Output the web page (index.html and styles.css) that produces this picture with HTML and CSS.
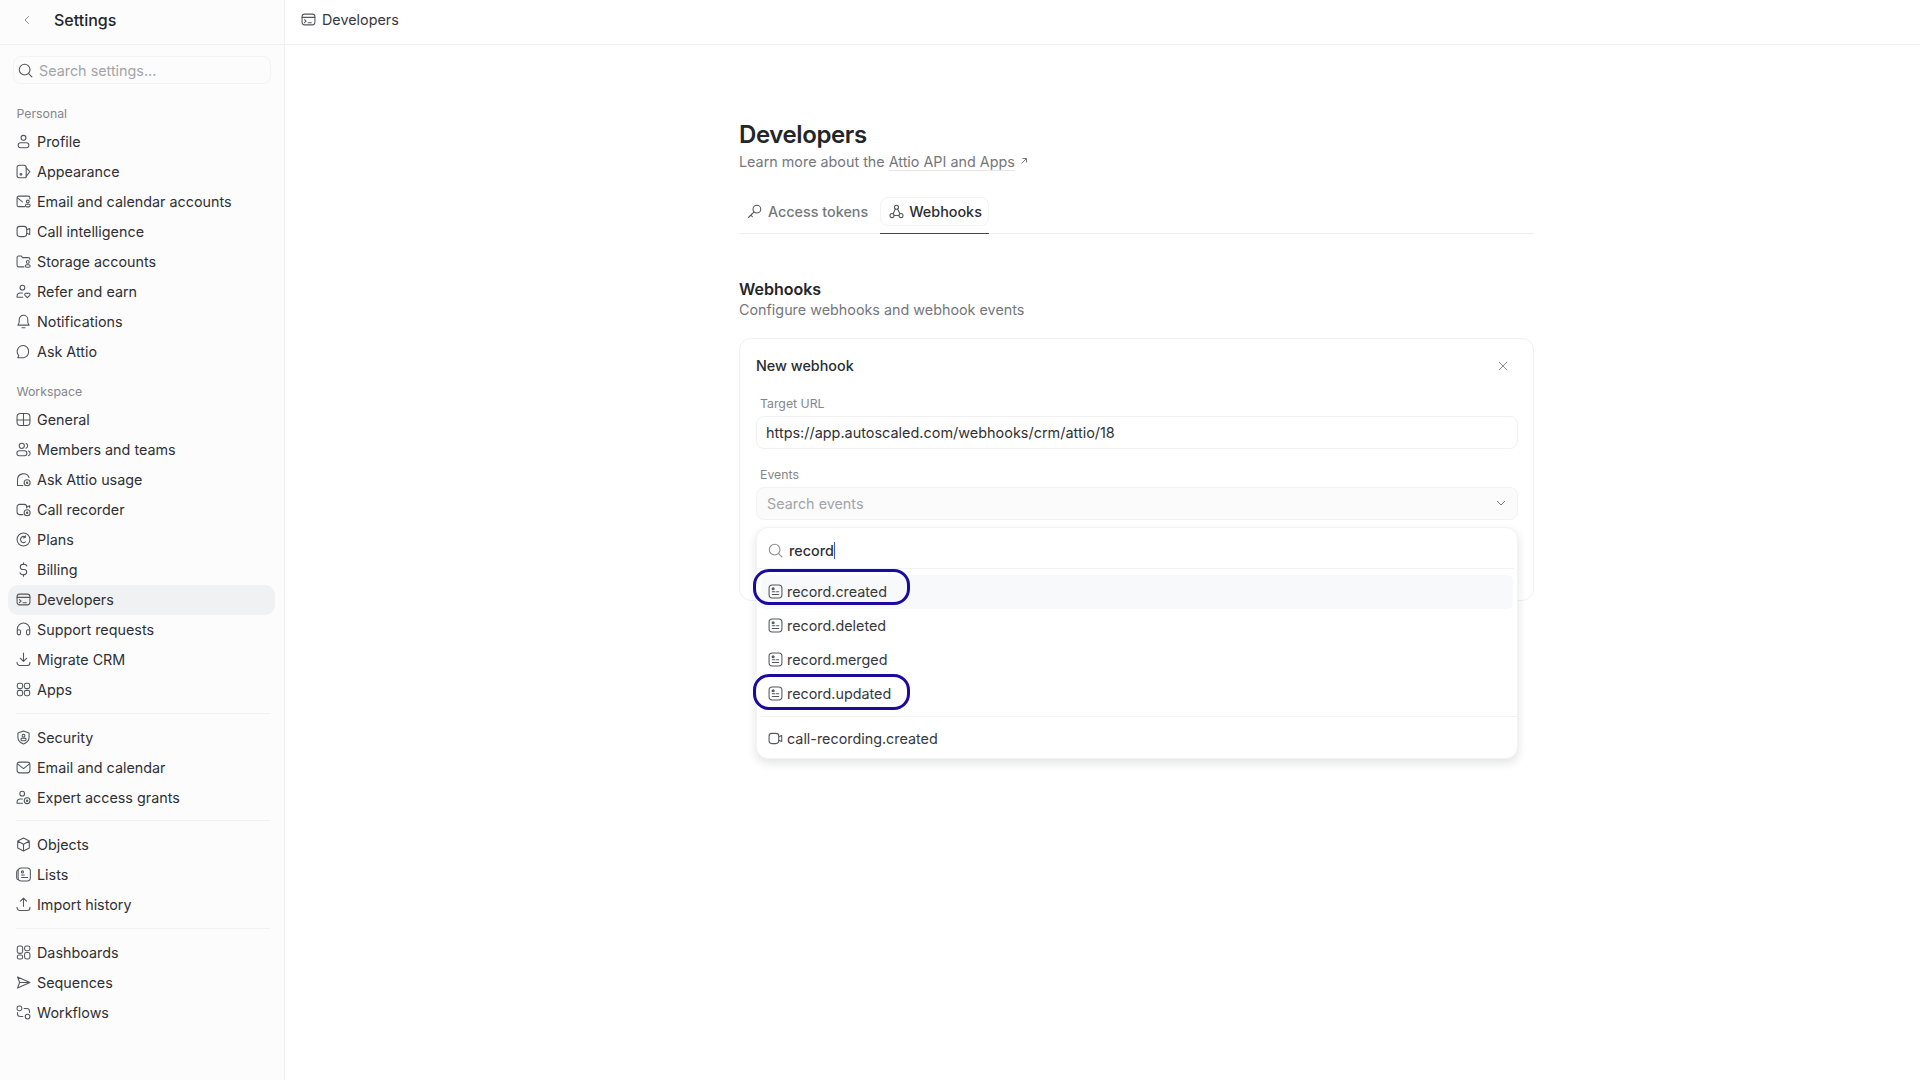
FILE: index.html
```html
<!DOCTYPE html>
<html lang="en">
<head>
<meta charset="utf-8">
<title>Settings - Developers</title>
<link rel="stylesheet" href="styles.css">
</head>
<body>
<svg class="defs" width="0" height="0" aria-hidden="true">
  <defs>
    <symbol id="i-record" viewBox="0 0 14 14"><rect x="1" y="1" width="12" height="12" rx="3"/><path d="M4 4.500h1.500M4 7.200h2.500M4 9.800h6M8 7.200h2"/><circle cx="4.800" cy="4.400" r=".9"/></symbol>
    <symbol id="i-video" viewBox="0 0 14 14"><rect x="1" y="2.200" width="9" height="9.600" rx="2.600"/><path d="M10 5.400l2.800-1.200v5.600L10 8.600"/></symbol>
    <symbol id="i-search" viewBox="0 0 14 14"><circle cx="6.200" cy="6.200" r="5"/><path d="M9.900 9.900L13 13"/></symbol>
  </defs>
</svg>
<div class="app">
  <aside class="sidebar">
    <div class="side-head">
      <svg class="back" viewBox="0 0 10 12"><path d="M6.500 2.500L3 6l3.500 3.500"/></svg>
      <span class="side-title">Settings</span>
    </div>
    <div class="side-search">
      <svg class="icon"><use href="#i-search"/></svg>
      <span>Search settings...</span>
    </div>
    <nav class="nav">
      <div class="nav-label">Personal</div>
      <a class="nav-item"><svg class="icon" viewBox="0 0 14 14"><circle cx="7" cy="3.600" r="2.300"/><rect x="2" y="8.200" width="10" height="4.600" rx="2.300"/></svg>Profile</a>
      <a class="nav-item"><svg class="icon" viewBox="0 0 14 14"><path d="M3 1.200h4.500a2 2 0 0 1 2 2v8.600a1 1 0 0 1-1 1H3a2 2 0 0 1-2-2V3.200a2 2 0 0 1 2-2z"/><path d="M9.500 3.600l3.400 3.600-3.400 4.400"/><circle cx="4.600" cy="9.600" r=".8"/></svg>Appearance</a>
      <a class="nav-item"><svg class="icon" viewBox="0 0 14 14"><path d="M8 11.800H2.600A1.600 1.600 0 0 1 1 10.200V3.600A1.600 1.600 0 0 1 2.600 2h8.800A1.600 1.600 0 0 1 13 3.600v1"/><path d="M1.400 3.600L6 7.400"/><circle cx="11" cy="7" r="1.300"/><rect x="8.800" y="9.600" width="4.400" height="2.400" rx="1.200"/></svg>Email and calendar accounts</a>
      <a class="nav-item"><svg class="icon"><use href="#i-video"/></svg>Call intelligence</a>
      <a class="nav-item"><svg class="icon" viewBox="0 0 14 14"><path d="M7.500 12H2.600A1.600 1.600 0 0 1 1 10.400V3.200a1.400 1.400 0 0 1 1.400-1.400h2.400l1.400 1.600h5.200A1.600 1.600 0 0 1 13 5v.4"/><circle cx="11" cy="7.400" r="1.300"/><rect x="8.800" y="10" width="4.400" height="2.400" rx="1.200"/></svg>Storage accounts</a>
      <a class="nav-item"><svg class="icon" viewBox="0 0 14 14"><circle cx="6" cy="3.400" r="2.200"/><path d="M6 8.400H4a3 3 0 0 0-3 3v1h5.400"/><path d="M10.600 12.800L8.400 10.600a1.300 1.300 0 0 1 2.200-1.600 1.300 1.300 0 0 1 2.200 1.600z"/></svg>Refer and earn</a>
      <a class="nav-item"><svg class="icon" viewBox="0 0 14 14"><path d="M7 1.200a4 4 0 0 0-4 4v2.600L1.800 10.400h10.400L11 7.800V5.200a4 4 0 0 0-4-4z"/><path d="M5.600 12.800h2.800"/></svg>Notifications</a>
      <a class="nav-item"><svg class="icon" viewBox="0 0 14 14"><path d="M7 1.400a5.800 5.800 0 0 1 0 11.400H1.600l1-1.900A5.700 5.700 0 0 1 7 1.400z"/></svg>Ask Attio</a>

      <div class="nav-label workspace">Workspace</div>
      <a class="nav-item"><svg class="icon" viewBox="0 0 14 14"><rect x="1" y="1.400" width="12" height="11.200" rx="3"/><path d="M1 7.400h12M7 7.400v5.200M7 1.400v6"/></svg>General</a>
      <a class="nav-item"><svg class="icon" viewBox="0 0 14 14"><circle cx="5.400" cy="3.600" r="2.400"/><rect x=".8" y="8.200" width="9.400" height="4.600" rx="2.300"/><path d="M9.400 1.400a2.400 2.400 0 0 1 0 4.400M11.600 8.400a2.300 2.300 0 0 1 0 4.400"/></svg>Members and teams</a>
      <a class="nav-item"><svg class="icon" viewBox="0 0 14 14"><path d="M6.400 12.600H1.400V7.200a5.600 5.600 0 0 1 10.800-2"/><circle cx="10.400" cy="10" r="2.800"/><circle cx="10.400" cy="10" r=".6"/></svg>Ask Attio usage</a>
      <a class="nav-item"><svg class="icon" viewBox="0 0 14 14"><path d="M6.400 11.800H3.400A2.400 2.400 0 0 1 1 9.400V4.600a2.400 2.400 0 0 1 2.400-2.400h4.200A2.400 2.400 0 0 1 10 4.600v1"/><path d="M10 4.600l2.800-1.200v2"/><circle cx="10.400" cy="10" r="2.800"/><circle cx="10.400" cy="10" r=".6"/></svg>Call recorder</a>
      <a class="nav-item"><svg class="icon" viewBox="0 0 14 14"><circle cx="7" cy="7" r="6"/><path d="M8.800 4.800A2.800 2.800 0 1 0 8.800 9.200"/><path d="M7 5.600l1.600-.6.2-1.400"/></svg>Plans</a>
      <a class="nav-item"><svg class="icon" viewBox="0 0 14 14"><path d="M10.200 3.800A2.800 2.800 0 0 0 7.400 2.200H6.400a2.400 2.400 0 0 0 0 4.800h1.200a2.400 2.400 0 0 1 0 4.800H6.600a2.800 2.800 0 0 1-2.800-1.600M7 .8v1.400M7 11.800v1.400"/></svg>Billing</a>
      <a class="nav-item active"><svg class="icon" viewBox="0 0 14 14"><rect x="1" y="2" width="12" height="10" rx="2.400"/><path d="M1 5h12M3.200 7.200l1.600 1.400-1.600 1.400M6.600 10h3"/></svg>Developers</a>
      <a class="nav-item"><svg class="icon" viewBox="0 0 14 14"><path d="M1.200 8V6.800a5.800 5.800 0 0 1 11.600 0V8"/><rect x="1.200" y="7.200" width="3" height="4.800" rx="1.400"/><rect x="9.800" y="7.200" width="3" height="4.800" rx="1.400"/></svg>Support requests</a>
      <a class="nav-item"><svg class="icon" viewBox="0 0 14 14"><path d="M7 1v7.600M4 5.800L7 8.800l3-3M1 9.600v.4a2.600 2.600 0 0 0 2.600 2.600h6.800A2.600 2.600 0 0 0 13 10v-.4"/></svg>Migrate CRM</a>
      <a class="nav-item"><svg class="icon" viewBox="0 0 14 14"><rect x="1.200" y="1.200" width="5" height="5" rx="1.800"/><rect x="7.800" y="1.200" width="5" height="5" rx="1.800"/><rect x="1.200" y="7.800" width="5" height="5" rx="1.800"/><rect x="7.800" y="7.800" width="5" height="5" rx="1.800"/></svg>Apps</a>
      <div class="nav-sep"></div>
      <a class="nav-item"><svg class="icon" viewBox="0 0 14 14"><path d="M7 .9l5.200 2v4.200c0 2.900-2.200 4.900-5.200 6-3-1.100-5.200-3.100-5.200-6V2.900z"/><circle cx="7" cy="5.300" r="1.300"/><rect x="4.600" y="7.600" width="4.800" height="2.400" rx="1.200"/></svg>Security</a>
      <a class="nav-item"><svg class="icon" viewBox="0 0 14 14"><rect x="1" y="2" width="12" height="10" rx="2.400"/><path d="M1.400 3.600L7 8l5.600-4.400"/></svg>Email and calendar</a>
      <a class="nav-item"><svg class="icon" viewBox="0 0 14 14"><circle cx="5.800" cy="3.400" r="2.200"/><path d="M6 8.400H4a3 3 0 0 0-3 3v1h5"/><circle cx="10.400" cy="10" r="2.700"/><circle cx="10.400" cy="10" r=".6"/></svg>Expert access grants</a>
      <div class="nav-sep"></div>
      <a class="nav-item"><svg class="icon" viewBox="0 0 14 14"><path d="M7 1l5.400 2.800v6.400L7 13l-5.400-2.800V3.800zM1.800 3.900L7 6.800l5.200-2.900M7 6.800V13"/></svg>Objects</a>
      <a class="nav-item"><svg class="icon" viewBox="0 0 14 14"><rect x="2" y="1" width="11.400" height="12" rx="3"/><path d="M2 2.600A2.600 2.600 0 0 0 .6 5v4.400A2.600 2.600 0 0 0 2 12M5.200 7.400h2.600M5.200 9.800h5.600"/><circle cx="6" cy="4.600" r="1"/></svg>Lists</a>
      <a class="nav-item"><svg class="icon" viewBox="0 0 14 14"><path d="M7 8.600V1.200M4.200 3.800L7 1l2.800 2.800M1 9.600v.4a2.600 2.600 0 0 0 2.600 2.600h6.800A2.600 2.600 0 0 0 13 10v-.4"/></svg>Import history</a>
      <div class="nav-sep"></div>
      <a class="nav-item"><svg class="icon" viewBox="0 0 14 14"><rect x="1.200" y="1" width="5" height="6.800" rx="1.800"/><rect x="8" y="1" width="5" height="4.400" rx="1.800"/><rect x="1.200" y="9.400" width="5" height="3.600" rx="1.600"/><rect x="8" y="7" width="5" height="6" rx="1.800"/></svg>Dashboards</a>
      <a class="nav-item"><svg class="icon" viewBox="0 0 14 14"><path d="M1.400 1.800L13 7 1.400 12.200 3.400 7zM3.400 7H13"/></svg>Sequences</a>
      <a class="nav-item"><svg class="icon" viewBox="0 0 14 14"><rect x="1" y="1" width="4.400" height="4.400" rx="1.800"/><circle cx="10.800" cy="10.800" r="2.200"/><path d="M7.600 3.200H10a2.600 2.600 0 0 1 2.600 2.600V7M6.400 10.800H4a2.600 2.600 0 0 1-2.600-2.600V7"/></svg>Workflows</a>
    </nav>
  </aside>
  <div class="main">
    <header class="topbar">
      <svg class="icon" viewBox="0 0 14 14"><rect x="1" y="2" width="12" height="10" rx="2.400"/><path d="M1 5h12M3.200 7.200l1.600 1.400-1.600 1.400M6.600 10h3"/></svg>
      <span>Developers</span>
    </header>
    <main class="content">
      <h1 class="page-title">Developers</h1>
      <p class="page-sub">Learn more about the <span class="link">Attio API and Apps</span><svg class="ext" viewBox="0 0 8 8"><path d="M1.500 6.500L6.500 1.500M2.500 1.500h4v4"/></svg></p>
      <div class="tabs">
        <div class="tab"><svg class="icon" viewBox="0 0 14 14"><circle cx="9.200" cy="4.800" r="3.600"/><path d="M6.600 7.400L1.400 12.600M3.600 10.400l1.400 1.400"/></svg>Access tokens</div>
        <div class="tab-active"><div class="tab-box"><svg class="icon" viewBox="0 0 14 14"><circle cx="7" cy="3" r="1.900"/><circle cx="2.800" cy="10.800" r="1.900"/><circle cx="11.200" cy="10.800" r="1.900"/><path d="M6 4.700L3.800 9M8 4.700L10.200 9M4.800 10.800h4.400"/></svg>Webhooks</div></div>
      </div>
      <h2 class="sec-title">Webhooks</h2>
      <p class="sec-sub">Configure webhooks and webhook events</p>
      <section class="card">
        <div class="card-head">
          <span>New webhook</span>
          <svg class="close" viewBox="0 0 12 12"><path d="M1 1l10 10M11 1L1 11"/></svg>
        </div>
        <label class="field-label">Target URL</label>
        <div class="input">https://app.autoscaled.com/webhooks/crm/attio/18</div>
        <label class="field-label events">Events</label>
        <div class="select">
          <span>Search events</span>
          <svg class="chev" viewBox="0 0 10 6"><path d="M1 1l4 4 4-4"/></svg>
        </div>
        <div class="menu">
          <div class="menu-search">
            <svg class="icon"><use href="#i-search"/></svg>
            <span class="query">record</span>
          </div>
          <div class="menu-list">
            <div class="menu-item hover"><svg class="icon"><use href="#i-record"/></svg>record.created<span class="mark"></span></div>
            <div class="menu-item"><svg class="icon"><use href="#i-record"/></svg>record.deleted</div>
            <div class="menu-item"><svg class="icon"><use href="#i-record"/></svg>record.merged</div>
            <div class="menu-item"><svg class="icon"><use href="#i-record"/></svg>record.updated<span class="mark mark-low"></span></div>
          </div>
          <div class="menu-list last">
            <div class="menu-item"><svg class="icon"><use href="#i-video"/></svg>call-recording.created</div>
          </div>
        </div>
      </section>
    </main>
  </div>
</div>
</body>
</html>
```
FILE: styles.css
```css
* { box-sizing: border-box; }
html, body { margin: 0; height: 100%; }
body {
  font-family: Inter, "Liberation Sans", sans-serif;
  font-size: 14.35px;
  color: #2b2c30;
  background: #fff;
  overflow: hidden;
}
.defs { position: absolute; }
.icon {
  width: 15px;
  height: 15px;
  flex: none;
  fill: none;
  stroke: #55575c;
  stroke-width: 1;
  stroke-linecap: round;
  stroke-linejoin: round;
}
.app { display: flex; height: 1080px; }

/* sidebar */
.sidebar {
  width: 285px;
  flex: none;
  background: #fcfcfc;
  border-right: 1px solid #f0f0f1;
}
.side-head {
  height: 45px;
  display: flex;
  align-items: center;
  padding: 0 0 5px 22px;
  gap: 22px;
  border-bottom: 1px solid #f0f0f1;
}
.back { width: 10px; height: 12px; fill: none; stroke: #8a8c90; stroke-width: 1; stroke-linecap: round; stroke-linejoin: round; }
.side-title { font-size: 16px; font-weight: 500; color: #232529; }
.side-search {
  margin: 11px 13px 0;
  height: 28px;
  border: 1px solid #f3f3f4;
  border-radius: 8px;
  display: flex;
  align-items: center;
  gap: 6px;
  padding-left: 4px;
  color: #a3a4a8;
}
.nav { padding: 0 9px 0 8px; margin-top: 21px; }
.nav-label {
  height: 18px;
  line-height: 18px;
  padding-left: 8.5px;
  font-size: 12.3px;
  color: #84868a;
  margin-bottom: 3px;
}
.nav-label.workspace { margin-top: 16.5px; margin-bottom: 4px; }
.nav-item {
  height: 30px;
  display: flex;
  align-items: center;
  gap: 6px;
  padding-left: 8px;
  border-radius: 10px;
  color: #2f3034;
}
.nav-item.active { background: #f0f1f2; }
.nav-sep { height: 1px; background: #f1f1f2; margin: 8px 5px 8.7px 8px; }

/* main */
.main { flex: 1; min-width: 0; }
.topbar {
  height: 45px;
  display: flex;
  align-items: center;
  gap: 6px;
  padding: 0 0 6px 16px;
  border-bottom: 1px solid #f0f0f1;
  color: #36383c;
}
.content { width: 795px; margin-left: 454px; padding-top: 75px; }
.page-title { margin: 0; font-size: 24px; line-height: 30px; font-weight: 600; letter-spacing: -.4px; color: #232529; }
.page-sub { margin: 2px 0 0; line-height: 20px; color: #75777b; display: flex; align-items: center; }
.link { color: #75777b; margin-left: 4px; border-bottom: 1px solid #e6e6e7; line-height: 17px; }
.ext { width: 8px; height: 8px; margin-left: 5px; margin-bottom: 3px; fill: none; stroke: #75777b; stroke-width: 1; }
.tabs { display: flex; gap: 12px; height: 37px; margin-top: 25px; border-bottom: 1px solid #efeff0; }
.tab {
  display: flex;
  align-items: center;
  gap: 6px;
  height: 28px;
  padding-left: 8px;
  color: #75777b;
  font-weight: 500;
}
.tab-active { width: 109px; height: 37px; border-bottom: 1px solid #44464a; color: #2b2c30; font-weight: 500; }
.tab-box {
  height: 29px;
  border: 1px solid #f3f3f4;
  border-radius: 8px;
  display: flex;
  align-items: center;
  gap: 5px;
  padding: 0 0 1px 8px;
}
.sec-title { margin: 45px 0 0; font-size: 16px; line-height: 20px; font-weight: 600; color: #232529; }
.sec-sub { margin: 1px 0 0; line-height: 20px; color: #75777b; }
.card {
  position: relative;
  margin-top: 18px;
  height: 263px;
  border: 1px solid #f1f1f2;
  border-radius: 12px;
  padding: 0 15px 0 16px;
}
.card-head {
  height: 45px;
  display: flex;
  align-items: center;
  justify-content: space-between;
  padding: 8px 10px 0 0;
  font-weight: 500;
  color: #2b2c30;
}
.close { width: 10px; height: 10px; fill: none; stroke: #75777b; stroke-width: 1; }
.field-label { display: block; padding-left: 4px; margin-top: 12px; line-height: 16px; font-size: 12.3px; color: #84868a; }
.events { margin-top: 17.5px; }
.input {
  margin-top: 4px;
  height: 33px;
  border: 1px solid #f1f1f2;
  border-radius: 8px;
  display: flex;
  align-items: center;
  padding-left: 9px;
  font-size: 14.45px;
  color: #2f3034;
}
.select {
  margin-top: 4px;
  height: 33px;
  border: 1px solid #f2f2f3;
  border-radius: 8px;
  background: #fbfbfb;
  display: flex;
  align-items: center;
  justify-content: space-between;
  padding: 0 11px 0 10px;
  color: #a3a4a8;
}
.chev { width: 10px; height: 6px; fill: none; stroke: #75777b; stroke-width: 1; }

/* dropdown over the card */
.menu {
  position: absolute;
  left: 16px;
  right: 15px;
  top: 188px;
  height: 232px;
  background: #fff;
  border: 1px solid #f3f3f4;
  border-radius: 12px;
  box-shadow: 0 4px 10px rgba(20, 22, 28, .12);
  display: flex;
  flex-direction: column;
}
.menu-search {
  height: 41px;
  margin: 0 3px 0 0;
  display: flex;
  align-items: center;
  gap: 6px;
  padding: 4px 0 0 11px;
  border-bottom: 1px solid #f1f2f3;
  flex: none;
}
.query { color: #2f3034; font-weight: 500; border-right: 1px solid #3a5bd0; line-height: 17px; }
.menu-search .icon { stroke: #8a8c90; }
.menu-list { padding: 6px 4px 0 0; border-bottom: 1px solid #f1f2f3; margin: 0 0 0 4px; height: 148px; flex: none; }
.menu-list.last { border: 0; height: auto; padding-top: 4px; }
.menu-item {
  position: relative;
  height: 34px;
  display: flex;
  align-items: center;
  gap: 4px;
  padding: 0 0 2px 7px;
  border-radius: 6px;
  color: #36383c;
}
.menu-list.last .menu-item { padding-bottom: 0; }
.menu-item.hover { background: #f8f9fa; }
.mark {
  position: absolute;
  left: -8px;
  top: -6px;
  width: 157px;
  height: 36px;
  border: 3.5px solid #1a0aa0;
  border-radius: 16px;
}
.mark-low { top: -3px; }
```
